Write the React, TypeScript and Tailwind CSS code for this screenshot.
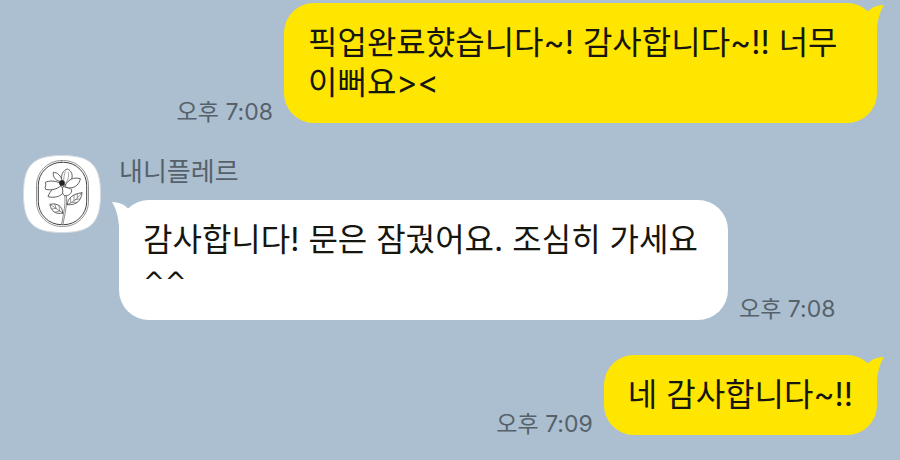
import React from 'react';

interface Message {
  id: number;
  mine: boolean;
  text: string;
  emoticon?: string;
  time: string;
}

const messages: Message[] = [
  { id: 1, mine: true, text: '픽업완료햤습니다~! 감사합니다~!! 너무 이뻐요><', time: '오후 7:08' },
  { id: 2, mine: false, text: '감사합니다! 문은 잠궜어요. 조심히 가세요', emoticon: '^^', time: '오후 7:08' },
  { id: 3, mine: true, text: '네 감사합니다~!!', time: '오후 7:09' },
];

const Avatar: React.FC = () => (
  <svg viewBox="0 0 78 78" className="w-[78px] h-[78px] shrink-0" fill="none" strokeLinejoin="round" strokeLinecap="round">
    <path d="M39 0.5C68 0.5 77.5 10 77.5 39S68 77.5 39 77.5 0.5 68 0.5 39 10 0.5 39 0.5Z" fill="#ffffff" stroke="#d5dbe0" />
    {/* Oval frame */}
    <rect x="13.5" y="5.5" width="52" height="66" rx="25" stroke="#888888" strokeWidth="0.9" />
    <rect x="15.3" y="7.3" width="48.4" height="62.4" rx="23.2" stroke="#444444" strokeWidth="1" />
    <g transform="translate(5 0) scale(0.3333)" stroke="#555555" strokeWidth="2.8" fill="#ffffff">
      {/* Stem */}
      <path d="M110 122C114 145 107 172 101 207M115 122C119 145 111 175 105 207" fill="none" strokeWidth="2" />
      {/* Petals */}
      <path d="M102 78C97 58 106 46 118 42C130 46 138 62 128 78C122 88 112 92 104 88Z" />
      <path d="M100 80C84 78 74 68 76 52C88 52 100 62 102 78Z" />
      <path d="M112 90C122 72 138 66 157 71C155 86 142 100 122 99C114 98 110 94 112 90Z" />
      <path d="M106 94C116 100 128 98 131 105C132 114 122 124 110 122C102 118 100 104 106 94Z" />
      <path d="M98 92C80 96 66 106 60 125C76 129 94 126 103 116C106 106 104 96 98 92Z" />
      <path d="M96 84C78 76 64 77 52 82C57 90 48 95 53 103C70 107 88 103 98 92Z" />
      <path d="M112 50C108 60 107 70 107 80M121 52C124 64 120 76 113 84" fill="none" strokeWidth="1.6" />
      <circle cx="102" cy="84" r="8" fill="#222222" stroke="#222222" strokeWidth="1" />
      {/* Leaves */}
      <path d="M118 149C118 128 136 117 162 113C160 136 146 152 118 149Z" />
      <path d="M104 174C104 154 88 143 66 148C69 167 82 180 104 174Z" />
      <path d="M118 149Q144 138 162 113M128 144V128M138 137V121M148 129V117M132 142L146 142M142 134L155 132M104 174L66 148M95 168L93 153M84 160L81 149M95 168L82 171M84 160L72 162" fill="none" strokeWidth="1.8" />
    </g>
  </svg>
);

const Tail: React.FC<{ mine: boolean }> = ({ mine }) => (
  <svg
    viewBox="0 0 22 30"
    className={`absolute top-0 w-[22px] h-[30px] ${mine ? '-right-[7px] text-[#ffe600]' : '-left-[7px] -scale-x-100 text-white'}`}
    fill="currentColor"
  >
    <path d="M6 8.5C10 4 15 2.5 22 2C18.5 8 16 14 15 26V30L4 22Z" />
  </svg>
);

const Bubble: React.FC<{ message: Message }> = ({ message }) => (
  <div className={`flex items-end gap-[11px] ${message.mine ? 'flex-row-reverse' : ''}`}>
    <div
      className={`relative rounded-[30px] px-6 py-5 text-[32px] leading-10 text-[#16160f] ${
        message.mine ? 'bg-[#ffe600] max-w-[593px]' : 'bg-white max-w-[609px]'
      }`}
    >
      <Tail mine={message.mine} />
      <p>
        {message.text}
        {message.emoticon && <span className="font-['DejaVu_Sans',sans-serif] text-[26px] leading-none"> {message.emoticon}</span>}
      </p>
    </div>
    <time className="shrink-0 text-[23px] leading-[22px] text-[#56616a]">{message.time}</time>
  </div>
);

const App: React.FC = () => {
  return (
    <main className="min-h-screen bg-[#abbfd1] pt-[3px] pb-6 px-[23px] font-['Inter','Noto_Sans_CJK_KR',sans-serif]">
      <Bubble message={messages[0]} />

      {/* Incoming message with sender profile */}
      <section className="mt-8 flex items-start gap-[18px]">
        <Avatar />
        <div className="min-w-0 pt-px">
          <h2 className="mb-3 text-[26px] leading-8 text-[#56616a]">내니플레르</h2>
          <Bubble message={messages[1]} />
        </div>
      </section>

      <div className="mt-[35px]">
        <Bubble message={messages[2]} />
      </div>
    </main>
  );
};

export default App;
